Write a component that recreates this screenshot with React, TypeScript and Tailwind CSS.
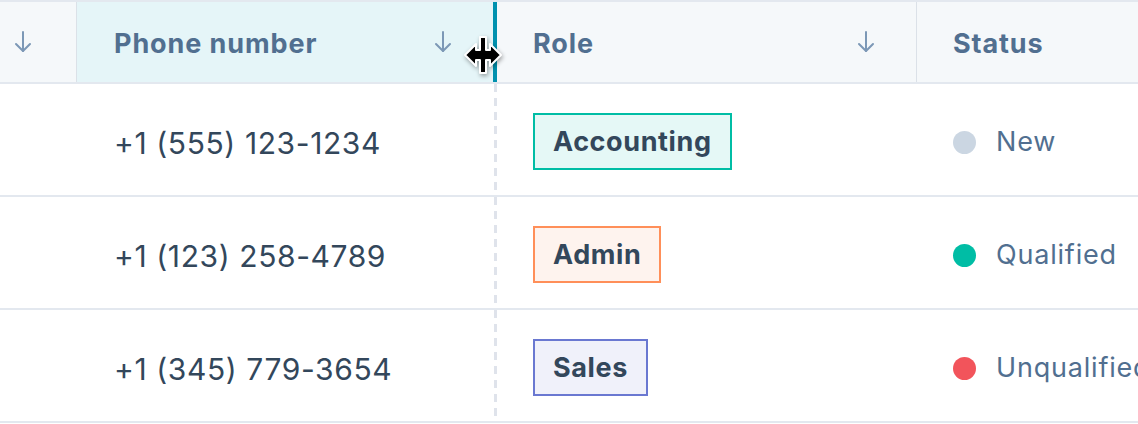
import React from 'react';

type Row = {
  phone: string;
  role: string;
  roleClass: string;
  status: string;
  dotClass: string;
};

const rows: Row[] = [
  { phone: '+1 (555) 123-1234', role: 'Accounting', roleClass: 'border-[#00bda5] bg-[#e5f8f6]', status: 'New', dotClass: 'bg-[#cbd6e2]' },
  { phone: '+1 (123) 258-4789', role: 'Admin', roleClass: 'border-[#ff8f59] bg-[#fef3ee]', status: 'Qualified', dotClass: 'bg-[#00bda5]' },
  { phone: '+1 (345) 779-3654', role: 'Sales', roleClass: 'border-[#6a78d1] bg-[#f0f1fa]', status: 'Unqualified', dotClass: 'bg-[#f2545b]' },
];

const SortArrow: React.FC<{ className?: string }> = ({ className }) => (
  <svg className={className} width="18" height="24" viewBox="0 0 18 24" fill="none" stroke="#7c98b6" strokeWidth={2} strokeLinecap="round" strokeLinejoin="round">
    <path d="M9 2v19" />
    <path d="M2 14l7 7 7-7" />
  </svg>
);

const ResizeCursor: React.FC = () => (
  <svg className="absolute left-[463px] top-[35px] drop-shadow-[1px_2px_2px_rgba(0,0,0,0.35)]" width="40" height="40" viewBox="0 0 40 40">
    <path
      d="M17 2h6v13h4v-6l11 11-11 11v-6h-4v13h-6v-13h-4v6L2 20 13 9v6h4z"
      fill="#000"
      stroke="#fff"
      strokeWidth={2}
      strokeLinejoin="round"
    />
  </svg>
);

export default function App() {
  return (
    <div className="relative w-[1138px] h-[424px] overflow-hidden bg-white font-['Inter',sans-serif]">
      {/* header */}
      <div className="flex h-[84px] border-t-2 border-b-2 border-[#e3e8ef] bg-[#f5f8fa]">
        <div className="w-[77px] shrink-0 flex items-center pl-[14px] border-r border-[#dbe1e8]">
          <SortArrow />
        </div>
        <div className="w-[416px] shrink-0 flex items-center justify-between pl-[37px] pr-[41px] bg-[#e5f5f8]">
          <span className="pt-[5px] text-[27px] font-bold tracking-[0.9px] text-[#516f90]">Phone number</span>
          <SortArrow />
        </div>
        <div className="w-[4px] shrink-0 bg-[#0091ae]" />
        <div className="w-[420px] shrink-0 flex items-center justify-between pl-[36px] pr-[41px] border-r border-[#dbe1e8]">
          <span className="pt-[5px] text-[27px] font-bold tracking-[0.9px] text-[#516f90]">Role</span>
          <SortArrow />
        </div>
        <div className="flex-1 flex items-center pl-[36px]">
          <span className="pt-[5px] text-[27px] font-bold tracking-[0.9px] text-[#516f90]">Status</span>
        </div>
      </div>

      {/* body */}
      {rows.map((r) => (
        <div key={r.phone} className="flex h-[113px] border-b-2 border-[#e3e8ef]">
          <div className="w-[77px] shrink-0" />
          <div className="w-[416px] shrink-0 flex items-center pl-[37px] pt-[7px]">
            <span className="text-[30px] tracking-[0.6px] text-[#33475b]">{r.phone}</span>
          </div>
          <div className="w-[4px] shrink-0 flex justify-center">
            <div className="w-[3px] h-full bg-[repeating-linear-gradient(to_bottom,#dfe3eb_0px,#dfe3eb_8px,transparent_8px,transparent_14px)]" />
          </div>
          <div className="w-[420px] shrink-0 flex items-center pl-[36px] pt-[4px]">
            <span className={`inline-flex items-center h-[57px] px-[18px] pt-[2px] border-2 text-[27px] font-bold tracking-[0.6px] text-[#33475b] ${r.roleClass}`}>
              {r.role}
            </span>
          </div>
          <div className="flex-1 flex items-center pl-[36px] gap-[20px] whitespace-nowrap pt-[6px]">
            <span className={`w-[23px] h-[23px] rounded-full shrink-0 ${r.dotClass}`} />
            <span className="text-[27px] tracking-[0.8px] text-[#516f90]">{r.status}</span>
          </div>
        </div>
      ))}

      <ResizeCursor />
    </div>
  );
}
